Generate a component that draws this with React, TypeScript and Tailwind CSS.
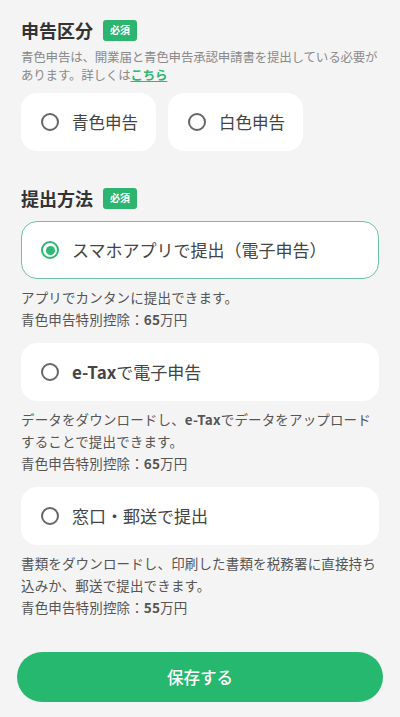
import React, { useState } from 'react';

const FONT = { fontFamily: '"Noto Sans CJK JP", "Noto Sans", sans-serif' };

type Method = 'app' | 'etax' | 'paper';

const Badge: React.FC = () => (
    <span className="ml-[10px] inline-flex h-[21px] items-center rounded-[3px] bg-[#2db46e] px-[7px] text-[10px] font-bold leading-none text-white">
        必須
    </span>
);

const Radio: React.FC<{ checked: boolean }> = ({ checked }) => (
    <span
        className={`flex h-[18px] w-[18px] shrink-0 items-center justify-center rounded-full border-2 ${
            checked ? 'border-[#2eb872]' : 'border-[#666]'
        }`}
    >
        {checked && <span className="h-[9px] w-[9px] rounded-full bg-[#2eb872]" />}
    </span>
);

const SectionTitle: React.FC<{ children: React.ReactNode }> = ({ children }) => (
    <div className="flex items-center">
        <h2 className="text-[18px] font-bold leading-[24px] text-[#333]">{children}</h2>
        <Badge />
    </div>
);

export default function App() {
    const [kind, setKind] = useState<'blue' | 'white' | null>(null);
    const [method, setMethod] = useState<Method>('app');

    // each desc is a list of lines, broken where the design breaks them
    const methods: { id: Method; label: React.ReactNode; desc: React.ReactNode[]; amount: string }[] = [
        {
            id: 'app',
            label: 'スマホアプリで提出（電子申告）',
            desc: ['アプリでカンタンに提出できます。'],
            amount: '65',
        },
        {
            id: 'etax',
            label: (
                <>
                    <span className="font-bold">e-Tax</span>で電子申告
                </>
            ),
            desc: [
                <>
                    データをダウンロードし、<span className="font-bold">e-Tax</span>でデータをアップロード
                </>,
                'することで提出できます。',
            ],
            amount: '65',
        },
        {
            id: 'paper',
            label: '窓口・郵送で提出',
            desc: ['書類をダウンロードし、印刷した書類を税務署に直接持ち', '込みか、郵送で提出できます。'],
            amount: '55',
        },
    ];

    return (
        <div className="min-h-[717px] w-full bg-[#f4f4f4] pb-[16px]" style={FONT}>
            <div className="px-[21px] pt-[18px]">
                <SectionTitle>申告区分</SectionTitle>
                <div className="mt-[6px] whitespace-nowrap text-[12.5px] leading-[18px] tracking-[-0.2px] text-[#8a8a8a]">
                    <p>青色申告は、開業届と青色申告承認申請書を提出している必要が</p>
                    <p>
                        あります。詳しくは<a className="font-bold text-[#2eb872] underline">こちら</a>
                    </p>
                </div>

                <div className="mt-[9px] flex gap-[12px]">
                    {(['blue', 'white'] as const).map((k) => (
                        <button
                            key={k}
                            onClick={() => setKind(k)}
                            className={`flex h-[58px] items-center gap-[13px] rounded-[16px] border-[1.5px] bg-white pl-[19px] pr-[17px] ${
                                kind === k ? 'border-[#6cc5a0]' : 'border-transparent'
                            }`}
                        >
                            <Radio checked={kind === k} />
                            <span className="text-[16.5px] text-[#444]">{k === 'blue' ? '青色申告' : '白色申告'}</span>
                        </button>
                    ))}
                </div>

                <div className="mt-[35px]">
                    <SectionTitle>提出方法</SectionTitle>
                </div>

                <div className="mt-[11px] flex flex-col">
                    {methods.map((m, i) => (
                        <div key={m.id} className={i > 0 ? 'mt-[13px]' : ''}>
                            <button
                                onClick={() => setMethod(m.id)}
                                className={`flex h-[58px] w-full items-center gap-[13px] rounded-[16px] border-[1.5px] bg-white pl-[19px] text-left ${
                                    method === m.id ? 'border-[#6cc5a0]' : 'border-transparent'
                                }`}
                            >
                                <Radio checked={method === m.id} />
                                <span className="text-[17px] text-[#444]">{m.label}</span>
                            </button>
                            <div className="mt-[7px] whitespace-nowrap text-[13.5px] leading-[22px] tracking-[0.15px] text-[#555]">
                                {m.desc.map((line, j) => (
                                    <p key={j}>{line}</p>
                                ))}
                                <p>
                                    青色申告特別控除：<span className="font-bold">{m.amount}</span>万円
                                </p>
                            </div>
                        </div>
                    ))}
                </div>
            </div>

            <div className="mt-[34px] px-[17px]">
                <button className="flex h-[50px] w-full items-center justify-center rounded-full bg-[#27b86f] text-[16.5px] font-medium text-white">
                    保存する
                </button>
            </div>
        </div>
    );
}
